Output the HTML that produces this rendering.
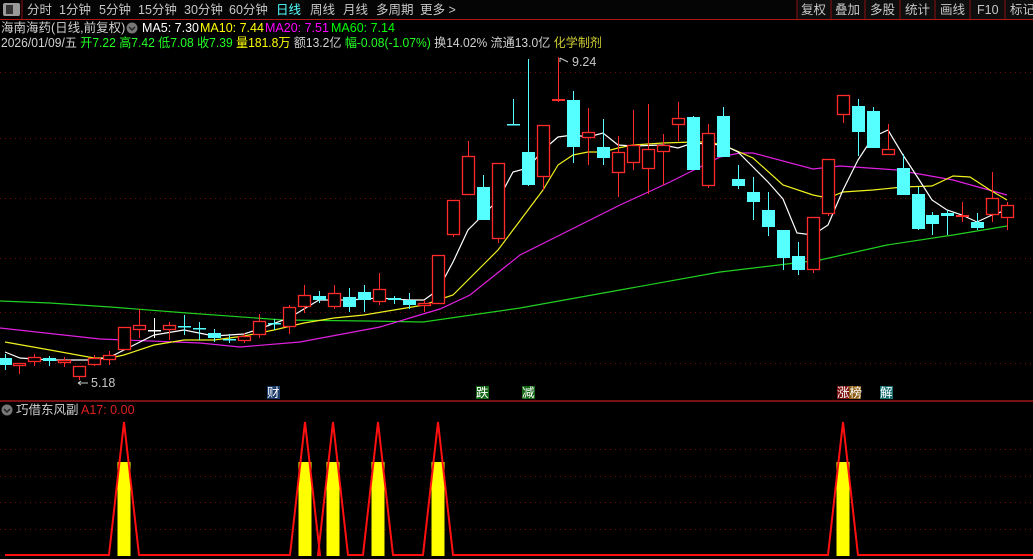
<!DOCTYPE html>
<html><head><meta charset="utf-8"><style>
html,body{margin:0;padding:0;background:#000;width:1033px;height:559px;overflow:hidden}
svg{display:block}
text{font-family:"Liberation Sans","Noto Sans CJK SC",sans-serif;font-size:12.5px}
</style></head><body>
<svg id="s" width="1033" height="559" xmlns="http://www.w3.org/2000/svg">
<rect width="1033" height="559" fill="#000"/>
<rect x="0" y="0" width="1033" height="19" fill="#050505"/>
<rect x="797" y="0" width="236" height="19" fill="#0e0e0e"/>
<rect x="3" y="3" width="17" height="13" rx="2" fill="#9a9a9a"/><rect x="6" y="5" width="7" height="9" fill="#333"/>
<line x1="22" y1="0" x2="22" y2="19" stroke="#8b1010"/>
<line x1="0" y1="19.5" x2="1033" y2="19.5" stroke="#b01818"/>
<g fill="#c8c8c8" font-size="13">
<text x="27" y="14">分时</text><text x="59" y="14">1分钟</text><text x="99" y="14">5分钟</text><text x="138" y="14">15分钟</text><text x="184" y="14">30分钟</text><text x="229" y="14">60分钟</text>
<text x="276" y="14" fill="#5ff">日线</text><text x="310" y="14">周线</text><text x="343" y="14">月线</text><text x="376" y="14">多周期</text><text x="420" y="14">更多 &gt;</text>
<text x="801" y="14">复权</text><text x="835" y="14">叠加</text><text x="870" y="14">多股</text><text x="905" y="14">统计</text><text x="940" y="14">画线</text><text x="977" y="14">F10</text><text x="1010" y="14">标记</text>
</g>
<g stroke="#8b1010"><line x1="797" y1="0" x2="797" y2="19"/><line x1="831" y1="0" x2="831" y2="19"/><line x1="865" y1="0" x2="865" y2="19"/><line x1="900" y1="0" x2="900" y2="19"/><line x1="935" y1="0" x2="935" y2="19"/><line x1="970" y1="0" x2="970" y2="19"/><line x1="1005" y1="0" x2="1005" y2="19"/></g>
<text x="1" y="32" fill="#d0d0d0">海南海药(日线,前复权)</text>
<circle cx="132" cy="28" r="5.5" fill="#777"/><path d="M129 27l3 3 3-3" stroke="#222" fill="none" stroke-width="1.5"/>
<text x="142" y="32" fill="#fff">MA5: 7.30</text><text x="200" y="32" fill="#ff0">MA10: 7.44</text><text x="265" y="32" fill="#f0f">MA20: 7.51</text><text x="331" y="32" fill="#0f0">MA60: 7.14</text>
<text x="1" y="47" fill="#d0d0d0" textLength="601" lengthAdjust="spacingAndGlyphs">2026/01/09/五 <tspan fill="#2f2">开7.22 高7.42 低7.08 收7.39</tspan> <tspan fill="#ff0">量181.8万</tspan> 额13.2亿 <tspan fill="#2f2">幅-0.08(-1.07%)</tspan> 换14.02% 流通13.0亿 <tspan fill="#cc3">化学制剂</tspan></text>
<g id="grid" stroke="#6a0c0c" stroke-dasharray="1,4"></g>
<g id="ma"></g>
<g id="c"></g>
<text x="91" y="387" fill="#c8c8c8">5.18</text><path d="M78 383h10M78 383l3-2M78 383l3 2" stroke="#c8c8c8" fill="none"/>
<text x="572" y="66" fill="#c8c8c8">9.24</text><path d="M560 58v4M560 58l8 4" stroke="#c8c8c8" fill="none"/>
<rect x="267" y="386" width="13" height="13" fill="#1a3a6a"/><text x="267" y="397" fill="#fff" font-size="12">财</text>
<rect x="476" y="386" width="13" height="13" fill="#176817"/><text x="476" y="397" fill="#fff" font-size="12">跌</text>
<rect x="522" y="386" width="13" height="13" fill="#176817"/><text x="522" y="397" fill="#fff" font-size="12">减</text>
<rect x="837" y="386" width="12" height="13" fill="#7a1010"/><rect x="849" y="386" width="12" height="13" fill="#8a5a10"/><text x="837" y="397" fill="#fff" font-size="12">涨榜</text>
<rect x="880" y="386" width="13" height="13" fill="#1a7070"/><text x="880" y="397" fill="#fff" font-size="12">解</text>
<line x1="0" y1="401" x2="1033" y2="401" stroke="#a01818" stroke-width="1.5"/>
<circle cx="7" cy="410" r="5.5" fill="#777"/><path d="M4 409l3 3 3-3" stroke="#222" fill="none" stroke-width="1.5"/>
<text x="16" y="414" fill="#d0d0d0">巧借东风副</text><text x="81" y="414" fill="#e02020">A17: 0.00</text>
<g id="sub"></g>
</svg>
<script>
var ns="http://www.w3.org/2000/svg";
function el(p,t,a){var e=document.createElementNS(ns,t);for(var k in a)e.setAttribute(k,a[k]);document.getElementById(p).appendChild(e);return e;}
[72,138,198,258,312,363].forEach(function(y){el("grid","line",{x1:0,x2:1033,y1:y+.5,y2:y+.5});});
[449,476,502,529].forEach(function(y){el("grid","line",{x1:0,x2:1033,y1:y+.5,y2:y+.5});});
var C=[[5,358,365,354,370,1],[19,363,366,363,374,0],[34,357,362,354,366,0],[49,358,361,356,366,1],[64,360,363,357,367,0],[79,366,377,366,380,0],[94,358,365,355,366,0],[109,355,360,351,365,0],[124,327,350,327,350,0],[139,325,330,309,338,0],[154,330,331,318,338,2],[169,325,330,322,340,0],[184,326,327,315,335,1],[199,328,329,322,340,1],[214,333,338,329,342,1],[229,339,340,334,343,1],[244,336,341,333,343,0],[259,321,335,314,338,0],[274,323,324,319,330,1],[289,307,327,305,334,0],[304,295,307,285,313,0],[319,296,300,291,303,1],[334,293,307,285,309,0],[349,297,307,288,312,1],[364,292,300,285,312,1],[379,289,302,273,305,0],[394,298,300,296,304,1],[409,300,305,293,309,1],[424,303,306,300,312,0],[438,255,304,255,304,0],[453,200,235,200,237,0],[468,156,195,141,195,0],[483,187,220,175,220,1],[498,163,239,163,243,0],[513,124,125,99,125,1],[528,152,185,59,186,1],[543,125,177,125,190,0],[558,99,101,57,102,0],[573,100,147,91,163,1],[588,132,138,108,165,0],[603,147,158,119,165,1],[618,152,173,136,197,0],[633,145,163,110,170,0],[648,149,169,104,194,0],[663,145,152,134,185,0],[678,118,125,102,141,0],[693,117,170,116,170,1],[708,133,186,124,188,0],[723,116,157,107,157,1],[738,179,186,165,189,1],[753,192,202,177,220,1],[768,210,227,192,236,1],[783,230,258,230,270,1],[798,256,270,242,275,1],[813,217,270,217,273,0],[828,159,214,159,216,0],[843,95,115,95,123,0],[858,106,132,99,156,1],[873,111,148,107,148,1],[888,149,155,124,155,0],[903,168,195,154,195,1],[918,194,229,187,230,1],[932,215,224,212,235,1],[947,213,216,210,235,1],[962,215,216,202,222,0],[977,222,228,213,230,1],[992,198,215,172,222,0],[1007,205,218,202,230,0]];
C.forEach(function(c){var x=c[0],col=c[5]==0?"#ff2a2a":(c[5]==1?"#55ffff":"#fff");
var h=c[2]-c[1];
if(c[5]==0){
 el("c","line",{x1:x+.5,x2:x+.5,y1:c[3],y2:c[1],stroke:col});
 el("c","line",{x1:x+.5,x2:x+.5,y1:c[2],y2:c[4],stroke:col});
 if(h<=2)el("c","rect",{x:x-6,y:c[1],width:13,height:2,fill:col});else el("c","rect",{x:x-5.5,y:c[1]+.5,width:12,height:h-1,fill:"#000",stroke:col,"stroke-width":1.3});}
else{el("c","line",{x1:x+.5,x2:x+.5,y1:c[3],y2:c[4],stroke:col});el("c","rect",{x:x-6,y:c[1],width:13,height:Math.max(h,1.5),fill:col});}
});
function pl(pts,col){el("ma","polyline",{points:pts,fill:"none",stroke:col,"stroke-width":1.2});}
pl("0,301 50,303 110,307 187,313 283,320 367,321 423,322 520,308 620,290 720,272 820,260 887,245 953,235 1007,226","#20d020");
pl("0,328 100,339 200,343 240,347 300,342 380,327 423,314 440,309 470,295 520,255 570,230 620,205 670,182 720,157 740,153 753,153 813,169 840,166 897,170 953,180 1007,195","#e020e0");
pl("5,342 50,350 94,358 110,358 124,355 154,345 184,340 214,340 244,336 274,330 304,323 334,318 364,315 394,310 424,305 438,300 453,295 468,280 483,265 498,250 513,230 528,210 543,190 558,165 573,155 588,152 603,152 618,148 633,145 663,143 693,142 708,142 723,145 753,158 783,185 813,195 828,198 843,192 873,190 903,187 932,186 953,176 970,177 990,190 1007,200","#f0f020");
pl("5,352 20,358 50,360 94,360 110,357 124,350 154,335 184,330 214,336 244,334 259,329 289,318 319,300 349,300 379,298 409,300 424,300 438,290 453,262 468,230 483,215 498,200 513,172 528,168 543,150 558,137 573,135 588,137 603,133 618,145 633,146 663,145 678,148 693,143 723,145 738,152 753,167 768,182 783,199 797,233 813,235 828,225 843,190 858,160 873,137 888,130 903,155 918,178 932,200 947,210 962,215 977,222 992,215 1007,210","#fff");
var P=[124,305,333,378,438,843],d="M5 555";
P.forEach(function(x){el("sub","rect",{x:x-6.5,y:462,width:13,height:94,fill:"#ffff00"});d+=" L"+(x-15)+" 555 L"+x+" 422 L"+(x+15)+" 555";});
d+=" L1033 555";
el("sub","path",{d:d,fill:"none",stroke:"#ff1010","stroke-width":2});
</script>
</body></html>
